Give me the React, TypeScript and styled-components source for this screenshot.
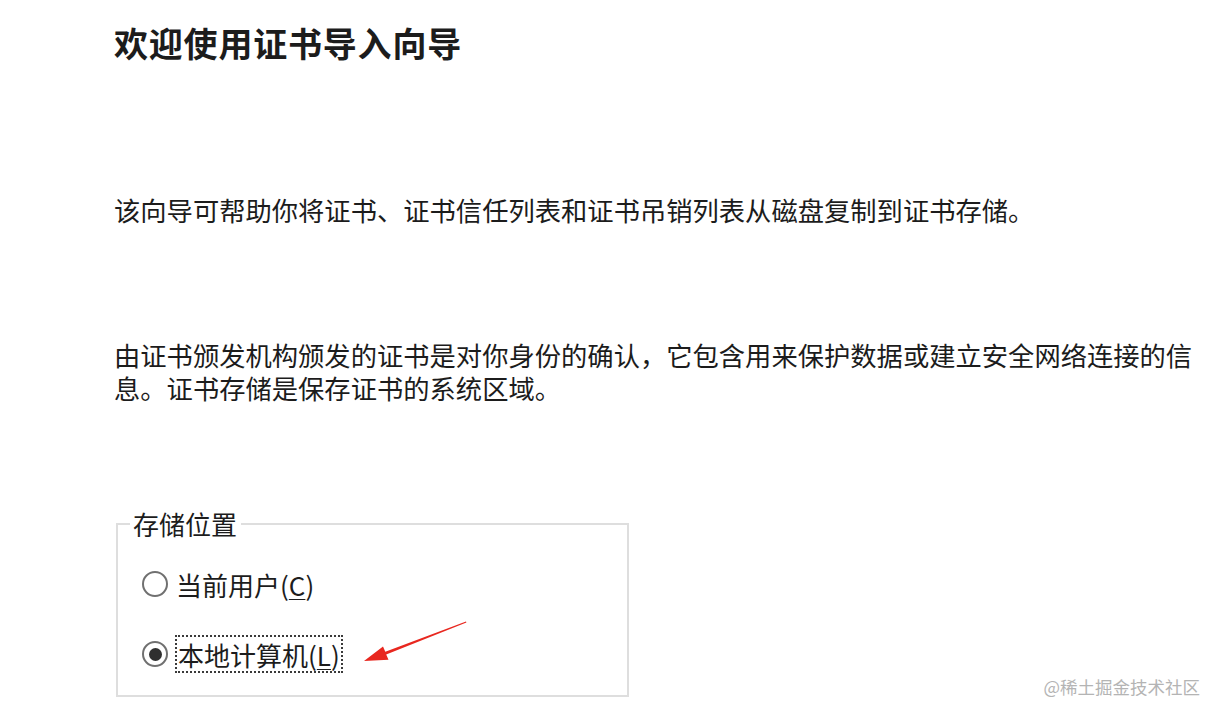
import React from 'react';
import styled, { createGlobalStyle } from 'styled-components';

const GlobalStyle = createGlobalStyle`
  html, body {
    margin: 0;
    padding: 0;
    background: #fff;
  }
  body {
    font-family: 'Noto Sans CJK SC', 'Noto Sans', sans-serif;
    color: #1c1c1c;
  }
`;

const Page = styled.div`
  position: relative;
  width: 1208px;
  height: 704px;
  overflow: hidden;
  padding-left: 114px;
  box-sizing: border-box;
  display: flex;
  flex-direction: column;
`;

const Title = styled.h1`
  margin: 23px 0 0;
  font-size: 34px;
  line-height: 40px;
  font-weight: 700;
  letter-spacing: 0.8px;
`;

const Paragraph = styled.p<{ $top: number }>`
  margin: ${(p) => p.$top}px 0 0;
  width: 1094px;
  font-size: 26.3px;
  line-height: 33px;
`;

const GroupBox = styled.fieldset`
  margin: 105px 0 0 2px;
  width: 513px;
  box-sizing: border-box;
  border: 2px solid #dedede;
  padding: 26px 0 22px 24px;
  display: flex;
  flex-direction: column;
  gap: 32px;
`;

const Legend = styled.legend`
  margin-left: -12px;
  padding: 0 4px 0 3px;
  font-size: 26px;
  line-height: 30px;
`;

const Option = styled.label`
  display: flex;
  align-items: center;
  height: 38px;
  gap: 7px;
  font-size: 26px;
  cursor: default;
`;

const RadioCircle = styled.span<{ $checked?: boolean }>`
  position: relative;
  flex: none;
  width: 22px;
  height: 22px;
  border: 2px solid #707070;
  border-radius: 50%;
  background: #fff;

  &::after {
    content: '';
    display: ${(p) => (p.$checked ? 'block' : 'none')};
    position: absolute;
    left: 4.5px;
    top: 4.5px;
    width: 13px;
    height: 13px;
    border-radius: 50%;
    background: #2f2f2f;
  }
`;

const OptionText = styled.span<{ $focused?: boolean }>`
  display: flex;
  align-items: center;
  height: 38px;
  padding: 0 3px;
  margin-left: ${(p) => (p.$focused ? '0' : '-2px')};
  box-sizing: border-box;
  outline: ${(p) => (p.$focused ? '2px dotted #3a3a3a' : 'none')};
  outline-offset: -2px;

  u {
    text-decoration-thickness: 1px;
    text-underline-offset: 3px;
  }
`;

const Arrow = styled.svg`
  position: absolute;
  left: 360px;
  top: 615px;
`;

const Watermark = styled.div`
  position: absolute;
  right: 8px;
  bottom: 5px;
  font-size: 17.5px;
  line-height: 24px;
  color: #b4b4b4;
`;

const options = [
  { text: '当前用户', key: 'C', checked: false },
  { text: '本地计算机', key: 'L', checked: true },
];

const App = () => (
  <>
    <GlobalStyle />
    <Page>
      <Title>欢迎使用证书导入向导</Title>
      <Paragraph $top={130}>该向导可帮助你将证书、证书信任列表和证书吊销列表从磁盘复制到证书存储。</Paragraph>
      <Paragraph $top={112}>
        由证书颁发机构颁发的证书是对你身份的确认，它包含用来保护数据或建立安全网络连接的信息。证书存储是保存证书的系统区域。
      </Paragraph>
      <GroupBox>
        <Legend>存储位置</Legend>
        {options.map((o) => (
          <Option key={o.key}>
            <RadioCircle $checked={o.checked} />
            <OptionText $focused={o.checked}>
              {o.text}(<u>{o.key}</u>)
            </OptionText>
          </Option>
        ))}
      </GroupBox>
      <Arrow width={110} height={50} viewBox='360 615 110 50'>
        <polygon points='466,621.5 466.4,622.6 386.2,654.4 388.5,659.8 364,661 383,646.4 385.3,651.8' fill='#e8271f' />
      </Arrow>
      <Watermark>@稀土掘金技术社区</Watermark>
    </Page>
  </>
);

export default App;
